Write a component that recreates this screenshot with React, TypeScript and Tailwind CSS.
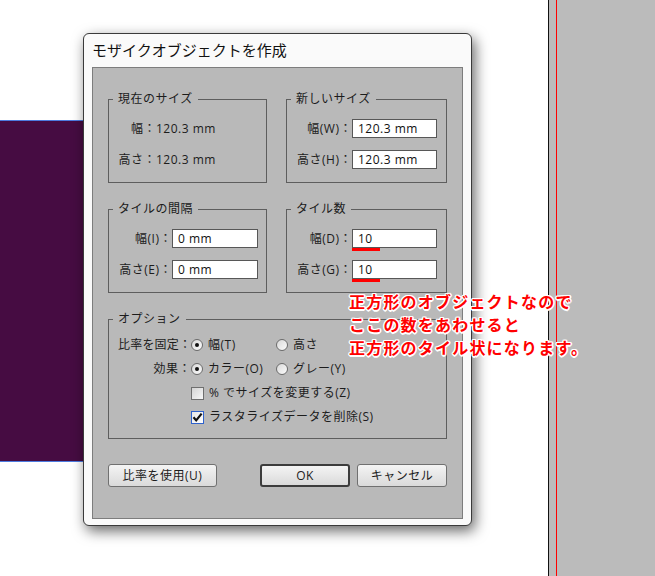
import React from 'react'

const UI =
  "font-['Open_Sans','Noto_Sans_CJK_JP',sans-serif] text-[12px] leading-[16px] tracking-[0.5px] text-[#1c1c1c] whitespace-nowrap"

type GroupProps = {
  title: string
  className: string
  children: React.ReactNode
}

function Group({ title, className, children }: GroupProps) {
  return (
    <div className={`relative border border-[#5e5e5e] ${className}`}>
      <span className="absolute -top-[9px] left-[4px] bg-[#b9b9b9] px-[5px] leading-[16px]">
        {title}
      </span>
      {children}
    </div>
  )
}

function TextBox({ value, width, mark }: { value: string; width: string; mark?: boolean }) {
  return (
    <div className={`relative ${width}`}>
      <div className="flex h-[19px] items-center border border-[#575757] bg-white pl-[5px] text-[#111]">
        {value}
      </div>
      {mark && <span className="absolute left-0 top-full h-[3px] w-[28px] bg-[#ff0000]" />}
    </div>
  )
}

function Radio({ checked }: { checked?: boolean }) {
  return (
    <span className="flex h-[12px] w-[12px] shrink-0 items-center justify-center rounded-full border border-[#6b6b6b] bg-linear-to-br from-[#d9d9d9] to-[#fbfbfb]">
      {checked && <span className="h-[4px] w-[4px] rounded-full bg-[#111]" />}
    </span>
  )
}

function Check({ checked }: { checked?: boolean }) {
  return checked ? (
    <span className="flex h-[13px] w-[13px] shrink-0 items-center justify-center border border-[#2f62cc] bg-linear-to-br from-[#e8e8e8] to-white">
      <svg width="11" height="11" viewBox="0 0 11 11">
        <path d="M1.5 5.3 L4.2 8.4 L9.6 1.6" fill="none" stroke="#111" strokeWidth="2.2" />
      </svg>
    </span>
  ) : (
    <span className="h-[13px] w-[13px] shrink-0 border border-[#6f6f6f] bg-linear-to-br from-[#d4d4d4] to-[#f7f7f7]" />
  )
}

function Button({ label, className }: { label: string; className: string }) {
  return (
    <div
      className={`flex h-[23px] items-center justify-center rounded-[3px] bg-linear-to-b from-[#f4f4f4] to-[#dadada] ${className}`}
    >
      {label}
    </div>
  )
}

export default function App() {
  return (
    <div className="relative h-[576px] w-[655px] overflow-hidden bg-white">
      {/* artboard behind the dialog */}
      <div className="absolute left-0 top-[120px] h-[342px] w-[120px] border-y border-[#4d7be0] bg-[#460c42]" />
      <div className="absolute left-[548px] top-0 h-[576px] w-[107px] border-l border-[#111] bg-[#bbbbbb]">
        <span className="absolute left-[7px] top-0 h-full w-px bg-[#ff0000]" />
      </div>

      {/* dialog */}
      <div
        className={`absolute left-[83px] top-[33px] flex h-[493px] w-[389px] flex-col rounded-[6px] border border-[#3a3a3a] bg-[#fafafa] shadow-[3px_5px_14px_rgba(0,0,0,0.6)] ${UI}`}
      >
        <div className="flex h-[33px] shrink-0 items-center pb-[2px] pl-[8px] text-[15px] tracking-normal text-[#111]">
          モザイクオブジェクトを作成
        </div>
        <div className="mx-[8px] mb-[6px] flex flex-1 flex-col border border-[#7d7d7d] bg-[#b9b9b9] px-[15px] pt-[31px]">
          <div className="grid grid-cols-[159px_161px] gap-x-[19px]">
            <Group title="現在のサイズ" className="h-[84px] pl-[9px] pt-[19px]">
              <div className="flex flex-col gap-[12px]">
                <div className="flex h-[19px] items-center">
                  <span className="w-[38px] text-right">幅：</span>
                  <span>120.3 mm</span>
                </div>
                <div className="flex h-[19px] items-center">
                  <span className="w-[38px] text-right">高さ：</span>
                  <span>120.3 mm</span>
                </div>
              </div>
            </Group>
            <Group title="新しいサイズ" className="h-[84px] pl-[8px] pt-[19px]">
              <div className="flex flex-col gap-[12px]">
                <div className="flex items-center">
                  <span className="w-[57px] text-right">幅(W)：</span>
                  <TextBox value="120.3 mm" width="w-[85px]" />
                </div>
                <div className="flex items-center">
                  <span className="w-[57px] text-right">高さ(H)：</span>
                  <TextBox value="120.3 mm" width="w-[85px]" />
                </div>
              </div>
            </Group>
          </div>

          <div className="mt-[26px] grid grid-cols-[159px_161px] gap-x-[19px]">
            <Group title="タイルの間隔" className="h-[84px] pl-[9px] pt-[19px]">
              <div className="flex flex-col gap-[12px]">
                <div className="flex items-center">
                  <span className="w-[54px] text-right">幅(I)：</span>
                  <TextBox value="0 mm" width="w-[86px]" />
                </div>
                <div className="flex items-center">
                  <span className="w-[54px] text-right">高さ(E)：</span>
                  <TextBox value="0 mm" width="w-[86px]" />
                </div>
              </div>
            </Group>
            <Group title="タイル数" className="h-[84px] pl-[8px] pt-[19px]">
              <div className="flex flex-col gap-[12px]">
                <div className="flex items-center">
                  <span className="w-[57px] text-right">幅(D)：</span>
                  <TextBox value="10" width="w-[85px]" mark />
                </div>
                <div className="flex items-center">
                  <span className="w-[57px] text-right">高さ(G)：</span>
                  <TextBox value="10" width="w-[85px]" mark />
                </div>
              </div>
            </Group>
          </div>

          <Group title="オプション" className="mt-[26px] h-[120px] pl-[9px] pt-[13px]">
            <div className="flex h-[24px] items-center">
              <span className="w-[73px] text-right tracking-[0.2px]">比率を固定：</span>
              <div className="flex w-[85px] items-center gap-[5px]">
                <Radio checked />
                <span>幅(T)</span>
              </div>
              <div className="flex items-center gap-[5px]">
                <Radio />
                <span>高さ</span>
              </div>
            </div>
            <div className="flex h-[24px] items-center">
              <span className="w-[73px] text-right">効果：</span>
              <div className="flex w-[85px] items-center gap-[5px]">
                <Radio checked />
                <span>カラー(O)</span>
              </div>
              <div className="flex items-center gap-[5px]">
                <Radio />
                <span>グレー(Y)</span>
              </div>
            </div>
            <div className="flex h-[24px] items-center gap-[5px] pl-[73px]">
              <Check />
              <span>% でサイズを変更する(Z)</span>
            </div>
            <div className="flex h-[24px] items-center gap-[5px] pl-[73px]">
              <Check checked />
              <span>ラスタライズデータを削除(S)</span>
            </div>
          </Group>

          <div className="mt-[25px] flex items-center justify-between">
            <Button label="比率を使用(U)" className="w-[109px] border border-[#707070]" />
            <div className="flex gap-[7px]">
              <Button label="OK" className="w-[90px] border-2 border-[#3c3c3c]" />
              <Button label="キャンセル" className="w-[90px] border border-[#707070]" />
            </div>
          </div>
        </div>
      </div>

      {/* annotation */}
      <div className="absolute left-[349px] top-[290px] font-['Noto_Sans_CJK_JP',sans-serif] text-[16px] font-bold leading-[23px] tracking-[1.2px] text-[#ff0000] [text-shadow:1.5px_0_0_#fff,-1.5px_0_0_#fff,0_1.5px_0_#fff,0_-1.5px_0_#fff,1px_1px_0_#fff,-1px_-1px_0_#fff,1px_-1px_0_#fff,-1px_1px_0_#fff]">
        <p>正方形のオブジェクトなので</p>
        <p>ここの数をあわせると</p>
        <p>正方形のタイル状になります。</p>
      </div>
    </div>
  )
}
